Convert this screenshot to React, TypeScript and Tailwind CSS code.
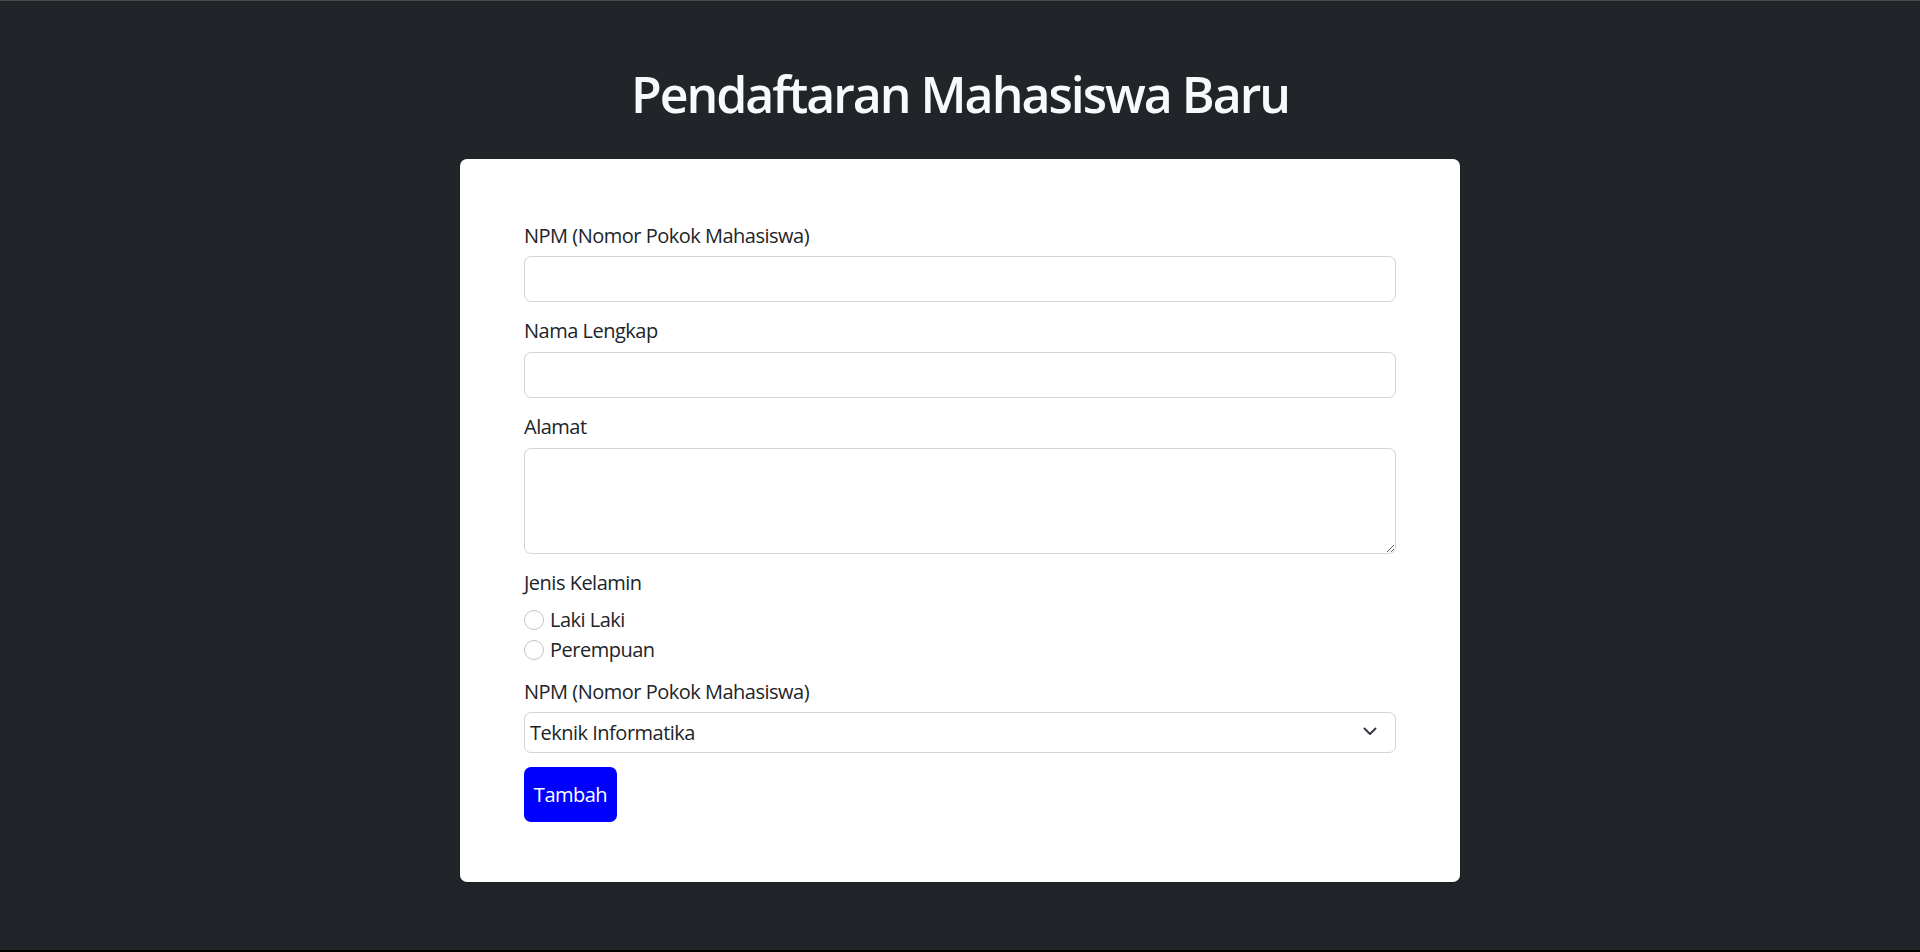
import React from 'react';

const font = { fontFamily: '"Open Sans", "Noto Sans", sans-serif' };

const Label = ({ children }: { children: React.ReactNode }) => (
  <label className="block text-[20px] leading-[30px] tracking-[-0.5px] text-[#212529]">{children}</label>
);

export default function App() {
  return (
    <div
      className="h-screen overflow-hidden bg-[#212529] border-t border-[#4b4b4b] border-b-2 border-b-black box-border"
      style={font}
    >
      <h1 className="pt-[63px] text-center text-[50px] leading-[60px] font-semibold tracking-[-2px] text-[#f8f9fa]">
        Pendaftaran Mahasiswa Baru
      </h1>

      <div className="mt-[35px] mx-auto w-[1000px] bg-white rounded-[7px] shadow-[0_1px_2px_rgba(0,0,0,0.3)] px-[64px] pt-[62px] pb-[60px]">
        <form onSubmit={(e) => e.preventDefault()}>
          {/* NPM */}
          <Label>NPM (Nomor Pokok Mahasiswa)</Label>
          <input
            type="text"
            className="mt-[5px] block w-full h-[46px] border border-[#ced4da] rounded-[7px] px-[15px] text-[20px] outline-none"
          />

          {/* Nama */}
          <div className="mt-[14px]">
            <Label>Nama Lengkap</Label>
          </div>
          <input
            type="text"
            className="mt-[6px] block w-full h-[46px] border border-[#ced4da] rounded-[7px] px-[15px] text-[20px] outline-none"
          />

          {/* Alamat */}
          <div className="mt-[14px]">
            <Label>Alamat</Label>
          </div>
          <textarea className="mt-[6px] block w-full h-[106px] border border-[#ced4da] rounded-[7px] px-[15px] py-[8px] text-[20px] outline-none" />

          {/* Jenis kelamin */}
          <div className="mt-[14px]">
            <Label>Jenis Kelamin</Label>
          </div>
          <div className="mt-[7px]">
            {['Laki Laki', 'Perempuan'].map((g) => (
              <label key={g} className="flex items-center h-[30px] text-[20px] tracking-[-0.5px] text-[#212529]">
                <input
                  type="radio"
                  name="jk"
                  className="appearance-none w-[20px] h-[20px] rounded-full border border-[#c4c4c4] bg-white shrink-0"
                />
                <span className="ml-[6px]">{g}</span>
              </label>
            ))}
          </div>

          {/* Jurusan */}
          <div className="mt-[12px]">
            <Label>NPM (Nomor Pokok Mahasiswa)</Label>
          </div>
          <div className="relative mt-[5px]">
            <select className="appearance-none block w-full h-[41px] border border-[#ced4da] rounded-[7px] pl-[5px] text-[20px] tracking-[-0.5px] text-[#212529] bg-white outline-none">
              <option>Teknik Informatika</option>
              <option>Sistem Informasi</option>
            </select>
            <svg
              className="absolute right-[19px] top-[15px] pointer-events-none"
              width="14"
              height="9"
              viewBox="0 0 14 9"
              fill="none"
            >
              <path d="M1.5 1.5L7 7L12.5 1.5" stroke="#343a40" strokeWidth="2" strokeLinecap="round" strokeLinejoin="round" />
            </svg>
          </div>

          <button
            type="submit"
            className="mt-[14px] block w-[93px] h-[55px] bg-[#0000ff] text-white text-[20px] tracking-[-0.5px] rounded-[7px]"
          >
            Tambah
          </button>
        </form>
      </div>
    </div>
  );
}
